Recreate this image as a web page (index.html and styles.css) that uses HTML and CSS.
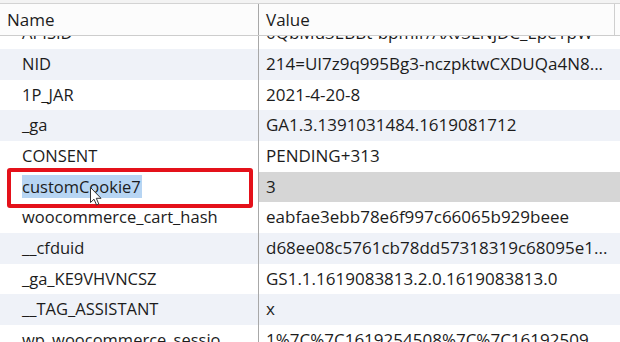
FILE: index.html
```html
<!DOCTYPE html>
<html>
<head>
<meta charset="utf-8">
<link rel="stylesheet" href="styles.css">
</head>
<body>
<div class="table">
  <div class="head">
    <div class="th">Name</div>
    <div class="th th-value">Value</div>
  </div>
  <div class="viewport">
    <div class="rows">
      <div class="row"><div class="name">APISID</div><div class="value">0QbMu3EBBt-bpmIr/AXv3LNjDC_Epe1pW</div></div>
      <div class="row alt"><div class="name">NID</div><div class="value">214=UI7z9q995Bg3-nczpktwCXDUQa4N8...</div></div>
      <div class="row"><div class="name">1P_JAR</div><div class="value">2021-4-20-8</div></div>
      <div class="row alt"><div class="name">_ga</div><div class="value">GA1.3.1391031484.1619081712</div></div>
      <div class="row"><div class="name">CONSENT</div><div class="value">PENDING+313</div></div>
      <div class="row selected">
        <div class="name editing"><span class="sel">customCookie7</span></div>
        <div class="value">3</div>
        <div class="highlight-box"></div>
        <svg class="cursor" width="12" height="19" viewBox="0 0 12 19"><path d="M0.5 0.5 L0.5 15.5 L4 12.2 L6.6 18 L8.8 17 L6.3 11.3 L11 11.3 Z" fill="#ffffff" stroke="#333" stroke-width="1"/></svg>
      </div>
      <div class="row"><div class="name">woocommerce_cart_hash</div><div class="value">eabfae3ebb78e6f997c66065b929beee</div></div>
      <div class="row alt"><div class="name">__cfduid</div><div class="value">d68ee08c5761cb78dd57318319c68095e1...</div></div>
      <div class="row"><div class="name">_ga_KE9VHVNCSZ</div><div class="value">GS1.1.1619083813.2.0.1619083813.0</div></div>
      <div class="row alt"><div class="name">__TAG_ASSISTANT</div><div class="value">x</div></div>
      <div class="row"><div class="name">wp_woocommerce_sessio...</div><div class="value">1%7C%7C1619254508%7C%7C16192509...</div></div>
    </div>
  </div>
</div>
</body>
</html>
```
FILE: styles.css
```css
html, body {
  margin: 0;
  padding: 0;
  background: #f3f3f3;
}
body {
  font-family: "Open Sans", "Noto Sans", sans-serif;
  font-size: 16.5px;
  color: #1c1c1c;
  width: 620px;
  height: 342px;
  overflow: hidden;
}
.table {
  margin-top: 3px;
  border-top: 1px solid #d3d3d3;
  background: #ffffff;
  height: 338px;
  display: flex;
  flex-direction: column;
}
.head {
  display: grid;
  grid-template-columns: 258px 357px;
  height: 31px;
  background: #fcfcfc;
  border-bottom: 1px solid #cdcdcd;
  flex: none;
  font-size: 17px;
}
.th {
  padding-left: 7px;
  line-height: 31px;
  white-space: nowrap;
}
.th-value {
  border-left: 1px solid #a8a8a8;
  border-right: 1px solid #cfcfcf;
}
.viewport {
  flex: 1;
  overflow: hidden;
  position: relative;
}
.rows {
  margin-top: -17.67px;
}
.row {
  display: grid;
  grid-template-columns: 258px 1fr;
  height: 30.67px;
  line-height: 30.67px;
  position: relative;
}
.row.alt {
  background: #eff2f8;
}
.name {
  padding-left: 22px;
  white-space: nowrap;
  overflow: hidden;
}
.value {
  padding-left: 7px;
  border-left: 1px solid #a8a8a8;
  white-space: nowrap;
  overflow: hidden;
  font-size: 17px;
}
.row.selected .value {
  background: #d6d6d6;
}
.name.editing {
  background: #ffffff;
}
.sel {
  background: #b7d5f3;
  display: inline-block;
  line-height: 23px;
  padding-right: 1px;
}
.highlight-box {
  position: absolute;
  left: 7px;
  top: -4px;
  width: 238px;
  height: 32px;
  border: 4px solid #e4111a;
  border-radius: 3px;
}
.cursor {
  position: absolute;
  left: 90px;
  top: 15px;
}
```
